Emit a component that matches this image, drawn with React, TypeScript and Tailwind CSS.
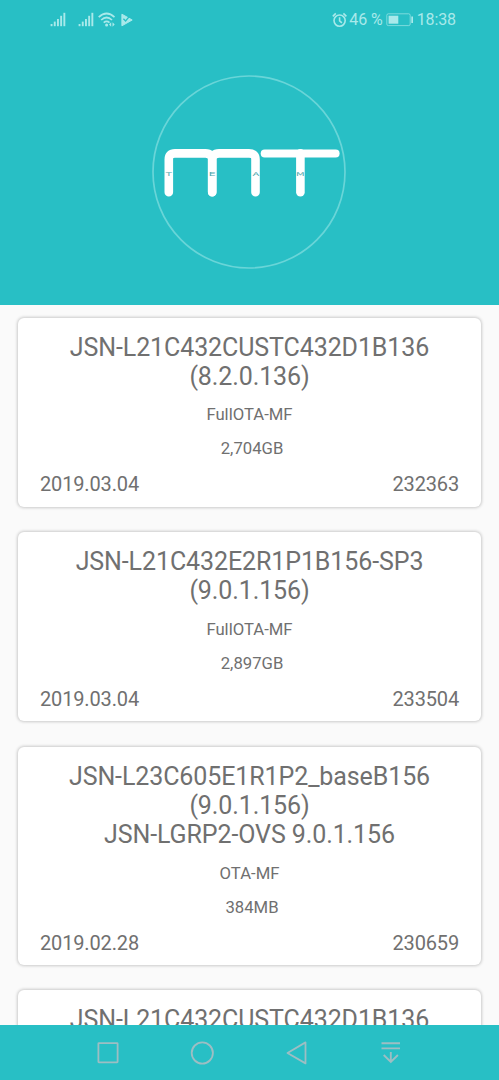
type Firmware = {
  title: string[];
  type: string;
  size: string;
  date: string;
  id: string;
};

const firmwares: Firmware[] = [
  {
    title: ["JSN-L21C432CUSTC432D1B136", "(8.2.0.136)"],
    type: "FullOTA-MF",
    size: "2,704GB",
    date: "2019.03.04",
    id: "232363",
  },
  {
    title: ["JSN-L21C432E2R1P1B156-SP3", "(9.0.1.156)"],
    type: "FullOTA-MF",
    size: "2,897GB",
    date: "2019.03.04",
    id: "233504",
  },
  {
    title: ["JSN-L23C605E1R1P2_baseB156", "(9.0.1.156)", "JSN-LGRP2-OVS 9.0.1.156"],
    type: "OTA-MF",
    size: "384MB",
    date: "2019.02.28",
    id: "230659",
  },
  {
    title: ["JSN-L21C432CUSTC432D1B136"],
    type: "",
    size: "",
    date: "",
    id: "",
  },
];

function Signal() {
  return (
    <svg width="16" height="16" viewBox="0 0 16 16" fill="currentColor">
      <rect x="0.6" y="12" width="1.9" height="2.2" />
      <rect x="3.8" y="9.6" width="1.9" height="4.6" />
      <rect x="7" y="7" width="1.9" height="7.2" />
      <rect x="10.2" y="3.8" width="1.9" height="10.4" />
      <rect x="13.4" y="0.8" width="1.9" height="13.4" />
    </svg>
  );
}

function StatusBar() {
  return (
    <div className="flex h-10 items-center justify-between pl-[50px] pr-[43px] text-[#a9e9ea]">
      <div className="flex items-center">
        <Signal />
        <span className="w-3" />
        <Signal />
        {/* Wifi */}
        <svg className="ml-1" width="18" height="16" viewBox="0 0 18 16" fill="none" stroke="currentColor" strokeWidth="1.7">
          <path d="M0.7 5.2Q8.6 -2.2 16.5 5.2M3.2 8Q8.6 3 14 8M5.7 10.7Q8.6 8.2 11.5 10.7" />
          <circle cx="8.6" cy="13" r="1.5" fill="currentColor" stroke="none" />
          <path d="M13.2 10.3v4.4L11 12.5zM14.5 10.3v4.4l2.2-2.2z" fill="currentColor" stroke="none" />
        </svg>
        {/* Play */}
        <svg className="ml-[5px]" width="12" height="14" viewBox="0 0 12 14">
          <path d="M0.9 1.2L11.2 7 0.9 12.8z" fill="currentColor" stroke="currentColor" strokeLinejoin="round" />
          <path d="M2.4 5.8L4.6 8 8.6 3.2" fill="none" stroke="#28bfc5" strokeWidth="1.3" />
        </svg>
      </div>
      <div className="flex items-center text-base leading-5 tracking-[-0.1px]">
        {/* Alarm */}
        <svg width="16" height="16" viewBox="0 0 16 16" fill="none" stroke="currentColor" strokeWidth="1.6">
          <circle cx="7.6" cy="8.6" r="5.6" />
          <path d="M7.6 5.2v3.6l2.3 2M0.8 4.3L3.8 1.4M14.4 4.3L11.4 1.4" />
        </svg>
        <span className="ml-px whitespace-nowrap">46 %</span>
        {/* Battery */}
        <svg className="ml-[3px]" width="28" height="14" viewBox="0 0 28 14">
          <rect x="0.8" y="0.8" width="23.4" height="11.8" rx="1.5" fill="none" stroke="currentColor" strokeOpacity="0.65" />
          <rect x="2.6" y="2.7" width="9.7" height="8" fill="currentColor" />
          <rect x="25.3" y="3.5" width="1.7" height="6.5" fill="currentColor" />
        </svg>
        <span className="ml-[3px]">18:38</span>
      </div>
    </div>
  );
}

function Logo() {
  return (
    <svg width="194" height="194" viewBox="0 0 194 194" fill="none">
      <circle cx="97" cy="97" r="96" stroke="#69d5d8" strokeWidth="1.7" />
      <g stroke="#fff" strokeWidth="8.6" strokeLinecap="round">
        <path d="M16.8 117.2V84.5Q16.8 78.4 23 78.4H53.5Q60.2 78.4 60.2 85.5V117.2" />
        <path d="M60.2 117.2V85.5Q60.2 78.4 67 78.4H97Q103.5 78.4 103.5 84.5V117.2" />
        <path d="M148.4 78.4V117.2" />
        <path d="M112.7 78.4H183.6" strokeWidth="8" />
      </g>
      {/* TEAM lettering across the stems */}
      <g fill="#4fa9ae" fontFamily="'DejaVu Sans', sans-serif" fontSize="5" textAnchor="middle">
        <text transform="translate(16.8 101) scale(2 1)">T</text>
        <text transform="translate(60.2 101) scale(2.2 1)">E</text>
        <text transform="translate(104 101) scale(2 1)">A</text>
        <text transform="translate(148.4 101) scale(2 1)">M</text>
      </g>
    </svg>
  );
}

function FirmwareCard({ item }: { item: Firmware }) {
  return (
    <div className="shrink-0 rounded-[6px] bg-white px-[22px] pt-[15px] pb-[10.6px] text-center text-[#707070] shadow-[0_0_3px_1px_rgba(0,0,0,0.19)]">
      <h2 className="text-[25px] leading-[29.3px] tracking-[-0.1px]">
        {item.title.map((line) => (
          <span key={line} className="block whitespace-nowrap">
            {line}
          </span>
        ))}
      </h2>
      <p className="mt-3.5 h-5 text-[16.7px] leading-5">{item.type}</p>
      <p className="mt-3.5 h-5 pl-[5px] text-[16.7px] leading-5">{item.size}</p>
      <div className="mt-[13px] flex h-6 justify-between text-[20px] leading-6 tracking-[-0.15px]">
        <span>{item.date}</span>
        <span>{item.id}</span>
      </div>
    </div>
  );
}

function NavBar() {
  return (
    <nav className="flex h-[55px] shrink-0 items-center bg-[#28bfc5] pl-[96px] text-[#9dbec3]">
      <svg width="24" height="24" viewBox="0 0 24 24" fill="none" stroke="currentColor" strokeWidth="1.8">
        <rect x="2.4" y="2.1" width="19.2" height="19.2" rx="0.5" />
      </svg>
      <svg className="ml-[70px]" width="24" height="24" viewBox="0 0 24 24" fill="none" stroke="currentColor" strokeWidth="1.8">
        <circle cx="12.3" cy="12" r="10.6" />
      </svg>
      <svg className="ml-[70px]" width="24" height="24" viewBox="0 0 24 24" fill="none" stroke="currentColor" strokeWidth="1.8" strokeLinejoin="round">
        <path d="M21.5 1.4v21L3.5 12z" />
      </svg>
      <svg className="ml-[70px]" width="24" height="24" viewBox="0 0 24 24" fill="none" stroke="currentColor" strokeWidth="1.9">
        <path d="M3.5 2.3h18.5M3.5 7.4h18.5M12.8 11v10M5.7 14l7.1 7 7.1-7" />
      </svg>
    </nav>
  );
}

export default function App() {
  return (
    <div className="flex h-[1080px] w-[499px] flex-col overflow-hidden bg-[#fafafa] font-['Roboto',sans-serif]">
      <header className="h-[305px] shrink-0 bg-[#28bfc5]">
        <StatusBar />
        <div className="mt-[35px] flex justify-center pr-[2px]">
          <Logo />
        </div>
      </header>
      <main className="flex min-h-0 flex-1 flex-col gap-[25.3px] overflow-hidden px-[18px] pt-[12.7px]">
        {firmwares.map((item, i) => (
          <FirmwareCard key={i} item={item} />
        ))}
      </main>
      <NavBar />
    </div>
  );
}
